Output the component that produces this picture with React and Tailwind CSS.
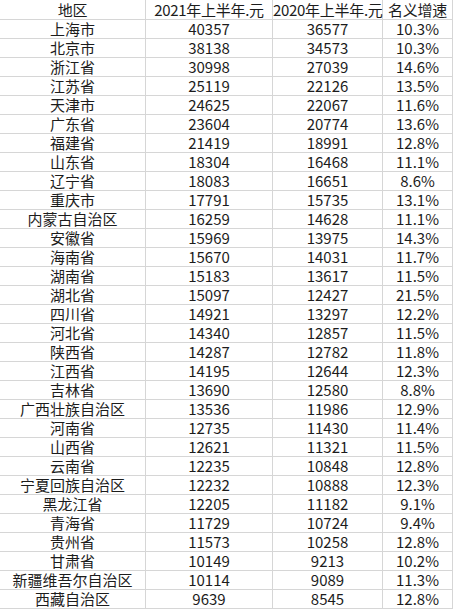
import React from "react";

// 各省 2021/2020 上半年人均可支配收入
const rows = [
  ["上海市", "40357", "36577", "10.3%"],
  ["北京市", "38138", "34573", "10.3%"],
  ["浙江省", "30998", "27039", "14.6%"],
  ["江苏省", "25119", "22126", "13.5%"],
  ["天津市", "24625", "22067", "11.6%"],
  ["广东省", "23604", "20774", "13.6%"],
  ["福建省", "21419", "18991", "12.8%"],
  ["山东省", "18304", "16468", "11.1%"],
  ["辽宁省", "18083", "16651", "8.6%"],
  ["重庆市", "17791", "15735", "13.1%"],
  ["内蒙古自治区", "16259", "14628", "11.1%"],
  ["安徽省", "15969", "13975", "14.3%"],
  ["海南省", "15670", "14031", "11.7%"],
  ["湖南省", "15183", "13617", "11.5%"],
  ["湖北省", "15097", "12427", "21.5%"],
  ["四川省", "14921", "13297", "12.2%"],
  ["河北省", "14340", "12857", "11.5%"],
  ["陕西省", "14287", "12782", "11.8%"],
  ["江西省", "14195", "12644", "12.3%"],
  ["吉林省", "13690", "12580", "8.8%"],
  ["广西壮族自治区", "13536", "11986", "12.9%"],
  ["河南省", "12735", "11430", "11.4%"],
  ["山西省", "12621", "11321", "11.5%"],
  ["云南省", "12235", "10848", "12.8%"],
  ["宁夏回族自治区", "12232", "10888", "12.3%"],
  ["黑龙江省", "12205", "11182", "9.1%"],
  ["青海省", "11729", "10724", "9.4%"],
  ["贵州省", "11573", "10258", "12.8%"],
  ["甘肃省", "10149", "9213", "10.2%"],
  ["新疆维吾尔自治区", "10114", "9089", "11.3%"],
  ["西藏自治区", "9639", "8545", "12.8%"],
];

const header = ["地区", "2021年上半年.元", "2020年上半年.元", "名义增速"];

const App = () => {
  return (
    <div
      className="w-[455px] h-[610px] bg-white overflow-hidden text-[15px] text-[#1c1c1c]"
      style={{ fontFamily: '"Noto Sans CJK SC", "Noto Sans", sans-serif' }}
    >
      <div className="grid grid-cols-[145px_126px_109px_69px] gap-px bg-[#d6d6d6] w-fit pr-px pb-px">
        {header.map((h, i) => (
          <div
            key={"h" + i}
            className="bg-white h-[19px] leading-[19px] text-center whitespace-nowrap tracking-[-0.3px]"
          >
            {h}
          </div>
        ))}
        {rows.map((r, ri) =>
          r.map((c, ci) => (
            <div
              key={ri + "-" + ci}
              className="bg-white h-[18px] leading-[18px] text-center whitespace-nowrap"
            >
              {c}
            </div>
          ))
        )}
      </div>
    </div>
  );
};

export default App;
